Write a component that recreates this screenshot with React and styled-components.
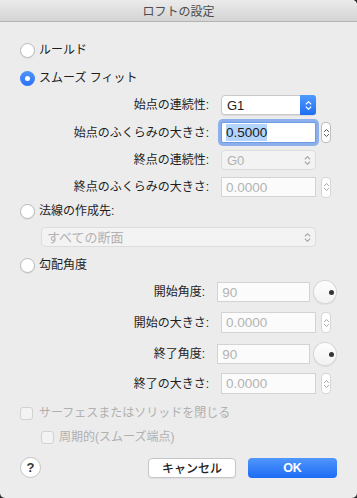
import React from 'react'
import styled, { createGlobalStyle, css } from 'styled-components'

const Global = createGlobalStyle`
  html, body { margin: 0; padding: 0; background: #2a2a2a; }
  body { font-family: "Liberation Sans", "Noto Sans CJK JP", sans-serif; }
`

const Window = styled.div`
  width: 357px;
  height: 498px;
  background: #ececec;
  border-radius: 0 5px 5px 5px;
  overflow: hidden;
  display: flex;
  flex-direction: column;
  color: #1e1e1e;
  font-size: 12px;
`

const TitleBar = styled.div`
  height: 21px;
  flex-shrink: 0;
  border-bottom: 1px solid #b4b4b4;
  background: linear-gradient(#ebebeb, #d4d4d4);
  display: flex;
  align-items: center;
  justify-content: center;
  color: #4d4d4d;
  font-size: 12px;
`

const Body = styled.div`
  display: flex;
  flex-direction: column;
  padding: 0 20px;
`

const OptionRow = styled.div`
  display: flex;
  align-items: center;
  gap: ${p => p.$gap || 4}px;
  height: ${p => p.$h || 18}px;
  margin-top: ${p => p.$mt}px;
  margin-left: ${p => p.$indent || 0}px;
  color: ${p => (p.$disabled ? '#b0b0b0' : '#1e1e1e')};
  line-height: 1;
`

const Radio = styled.span`
  width: 15px;
  height: 15px;
  box-sizing: border-box;
  border-radius: 50%;
  flex-shrink: 0;
  ${p =>
    p.$on
      ? css`
          background: linear-gradient(#4f95fb, #2a72f5);
          display: flex;
          align-items: center;
          justify-content: center;
          &::after {
            content: '';
            width: 5px;
            height: 5px;
            border-radius: 50%;
            background: #fff;
          }
        `
      : css`
          background: #fff;
          border: 1px solid #b8b8b8;
          box-shadow: 0 1px 1px rgba(0, 0, 0, 0.05);
        `}
`

const Check = styled.span`
  width: 13px;
  height: 13px;
  box-sizing: border-box;
  border-radius: 3px;
  border: 1px solid #d2d2d2;
  background: #f3f3f3;
  flex-shrink: 0;
`

const FieldRow = styled.div`
  display: flex;
  align-items: center;
  height: ${p => p.$h || 20}px;
  margin-top: ${p => p.$mt}px;
`

const Label = styled.span`
  width: 189px;
  margin-right: 12px;
  text-align: right;
  line-height: 1;
  color: #1e1e1e;
`

const Popup = styled.div`
  width: ${p => p.$w || 95}px;
  height: 20px;
  box-sizing: border-box;
  border-radius: 4px;
  display: flex;
  align-items: center;
  font-size: 13px;
  padding-left: 5px;
  ${p =>
    p.$disabled
      ? css`
          background: #f3f3f3;
          border: 1px solid #dcdcdc;
          color: #b2b2b2;
        `
      : css`
          background: #fff;
          border: 1px solid #c9c9c9;
          box-shadow: 0 1px 1px rgba(0, 0, 0, 0.08);
          color: #222;
        `}
`

const PopupArrow = styled.span`
  margin-left: auto;
  width: 16px;
  height: 100%;
  display: flex;
  align-items: center;
  justify-content: center;
  border-radius: 0 3px 3px 0;
  ${p =>
    p.$blue &&
    css`
      background: linear-gradient(#509afc, #1e6ef4);
      height: 20px;
      margin-right: -1px;
    `}
`

const NumberBox = styled.div`
  width: 95px;
  height: ${p => p.$h || 21}px;
  box-sizing: border-box;
  display: flex;
  align-items: center;
  padding-left: 4px;
  font-size: 13.5px;
  background: ${p => (p.$focus ? '#fff' : '#fbfbfb')};
  border: 1px solid ${p => (p.$focus ? '#6d9be3' : '#d3d3d3')};
  color: ${p => (p.$focus ? '#1a1a1a' : '#b3b3b3')};
  border-radius: ${p => (p.$focus ? 2 : 0)}px;
  ${p => p.$focus && css`box-shadow: 0 0 0 3px #8db0ec;`}
`

const Selected = styled.span`
  background: #b3d5fd;
  padding: 1px 0;
`

const Stepper = styled.span`
  margin-left: 5px;
  width: 10px;
  height: 21px;
  box-sizing: border-box;
  border-radius: 4px;
  border: 1px solid ${p => (p.$active ? '#bdbdbd' : '#d6d6d6')};
  background: #fff;
  display: flex;
  align-items: center;
  justify-content: center;
`

const Dial = styled.span`
  margin-left: 3px;
  width: 24px;
  height: 24px;
  box-sizing: border-box;
  border-radius: 50%;
  border: 1px solid #d6d6d6;
  background: linear-gradient(#fdfdfd, #f2f2f2);
  box-shadow: 0 1px 1px rgba(0, 0, 0, 0.06);
  display: flex;
  align-items: center;
  justify-content: flex-end;
  padding-right: 2px;
  &::after {
    content: '';
    width: 5px;
    height: 5px;
    border-radius: 50%;
    background: #333;
  }
`

const Footer = styled.div`
  display: flex;
  align-items: center;
  height: 21px;
  margin-top: 12px;
`

const Help = styled.span`
  width: 21px;
  height: 21px;
  box-sizing: border-box;
  border-radius: 50%;
  border: 1px solid #c4c4c4;
  background: #fff;
  display: flex;
  align-items: center;
  justify-content: center;
  font-size: 13px;
  font-weight: bold;
  color: #333;
  margin-right: auto;
`

const Button = styled.button`
  width: ${p => p.$w}px;
  height: 20px;
  box-sizing: border-box;
  border-radius: 4px;
  font-family: inherit;
  padding: 0;
  display: flex;
  align-items: center;
  justify-content: center;
  margin-left: ${p => p.$ml || 0}px;
  ${p =>
    p.$primary
      ? css`
          background: linear-gradient(#5096fb, #1d6cf4);
          border: none;
          color: #fff;
          font-size: 12.5px;
          font-weight: bold;
        `
      : css`
          background: #fff;
          border: 1px solid #c5c5c5;
          box-shadow: 0 1px 1px rgba(0, 0, 0, 0.06);
          color: #222;
          font-size: 12px;
          font-weight: 500;
        `}
`

function UpDown({ color = '#888', h = 11 }) {
  return (
    <svg width="7" height={h} viewBox="0 0 7 11" fill="none" stroke={color} strokeWidth="1.1" strokeLinecap="round" strokeLinejoin="round">
      <polyline points="1.2,4 3.5,1.6 5.8,4" />
      <polyline points="1.2,7 3.5,9.4 5.8,7" />
    </svg>
  )
}

export default function App() {
  return (
    <>
      <Global />
      <Window>
        <TitleBar>ロフトの設定</TitleBar>
        <Body>
          <OptionRow $mt={19}>
            <Radio />
            ルールド
          </OptionRow>
          <OptionRow $mt={10}>
            <Radio $on />
            スムーズ フィット
          </OptionRow>

          <FieldRow $mt={8}>
            <Label>始点の連続性:</Label>
            <Popup>
              G1
              <PopupArrow $blue>
                <UpDown color="#fff" />
              </PopupArrow>
            </Popup>
          </FieldRow>
          <FieldRow $mt={7} $h={21}>
            <Label>始点のふくらみの大きさ:</Label>
            <NumberBox $focus>
              <Selected>0.5000</Selected>
            </NumberBox>
            <Stepper $active>
              <UpDown color="#555" h={10} />
            </Stepper>
          </FieldRow>
          <FieldRow $mt={7}>
            <Label>終点の連続性:</Label>
            <Popup $disabled>
              G0
              <PopupArrow>
                <UpDown color="#a8a8a8" />
              </PopupArrow>
            </Popup>
          </FieldRow>
          <FieldRow $mt={7}>
            <Label>終点のふくらみの大きさ:</Label>
            <NumberBox $h={20}>0.0000</NumberBox>
            <Stepper>
              <UpDown color="#a8a8a8" h={10} />
            </Stepper>
          </FieldRow>

          <OptionRow $mt={5}>
            <Radio />
            法線の作成先:
          </OptionRow>
          <OptionRow $mt={7} $h={20} $indent={21}>
            <Popup $disabled $w={275}>
              すべての断面
              <PopupArrow>
                <UpDown color="#a8a8a8" />
              </PopupArrow>
            </Popup>
          </OptionRow>
          <OptionRow $mt={9}>
            <Radio />
            勾配角度
          </OptionRow>

          <FieldRow $mt={6} $h={24}>
            <Label>開始角度:</Label>
            <NumberBox $h={20}>90</NumberBox>
            <Dial />
          </FieldRow>
          <FieldRow $mt={8} $h={21}>
            <Label>開始の大きさ:</Label>
            <NumberBox>0.0000</NumberBox>
            <Stepper>
              <UpDown color="#a8a8a8" h={10} />
            </Stepper>
          </FieldRow>
          <FieldRow $mt={9} $h={24}>
            <Label>終了角度:</Label>
            <NumberBox $h={20}>90</NumberBox>
            <Dial />
          </FieldRow>
          <FieldRow $mt={7} $h={21}>
            <Label>終了の大きさ:</Label>
            <NumberBox>0.0000</NumberBox>
            <Stepper>
              <UpDown color="#a8a8a8" h={10} />
            </Stepper>
          </FieldRow>

          <OptionRow $mt={11} $h={16} $gap={6} $disabled>
            <Check />
            サーフェスまたはソリッドを閉じる
          </OptionRow>
          <OptionRow $mt={8} $h={16} $gap={5} $indent={21} $disabled>
            <Check />
            周期的(スムーズ端点)
          </OptionRow>

          <Footer>
            <Help>?</Help>
            <Button $w={88}>キャンセル</Button>
            <Button $w={89} $ml={12} $primary>OK</Button>
          </Footer>
        </Body>
      </Window>
    </>
  )
}
